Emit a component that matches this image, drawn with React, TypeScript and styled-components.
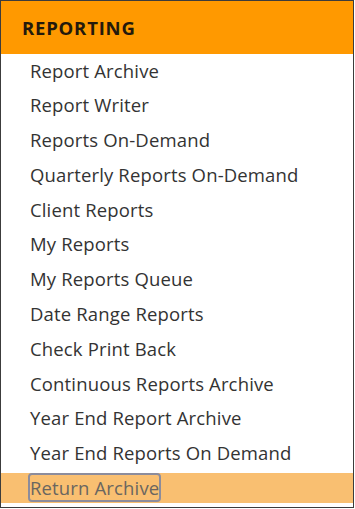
import React from 'react';
import styled, { createGlobalStyle } from 'styled-components';

const GlobalStyle = createGlobalStyle`
    body {
        margin: 0;
        background-color: #ffffff;
        font-family: "Open Sans", "Liberation Sans", sans-serif;
    }
`

const Panel = styled.div`
    width: 354px;
    height: 508px;
    box-sizing: border-box;
    border: 1px solid #3c3c3c;
    background-color: #ffffff;
    display: flex;
    flex-direction: column;
`

const Header = styled.div`
    height: 53px;
    flex-shrink: 0;
    background-color: #ff9900;
    display: flex;
    align-items: center;
    padding-left: 21px;
    font-size: 18.5px;
    font-weight: 700;
    color: #24190c;
    letter-spacing: 0.8px;
`

const List = styled.ul`
    list-style: none;
    margin: 0;
    padding: 1.5px 0 3px 0;
    display: flex;
    flex-direction: column;
    gap: 4.8px;
`

interface ItemProps {
    active?: boolean;
}

const Item = styled.li<ItemProps>`
    height: 30px;
    line-height: 30px;
    padding-left: 29px;
    font-size: 18.5px;
    letter-spacing: 0.15px;
    color: ${props => props.active ? '#6a6660' : '#333333'};
    background-color: ${props => props.active ? '#f9bf71' : 'transparent'};
    white-space: nowrap;
`

const Focused = styled.span`
    outline: 2px solid #8c8c9c;
    outline-offset: 0px;
    border-radius: 2px;
    line-height: 25px;
    margin-top: 2px;
    display: inline-block;
    vertical-align: top;
`

const items = [
    'Report Archive',
    'Report Writer',
    'Reports On-Demand',
    'Quarterly Reports On-Demand',
    'Client Reports',
    'My Reports',
    'My Reports Queue',
    'Date Range Reports',
    'Check Print Back',
    'Continuous Reports Archive',
    'Year End Report Archive',
    'Year End Reports On Demand',
]

export default function App(): JSX.Element {
    return (
        <>
            <GlobalStyle />
            <Panel>
                <Header>REPORTING</Header>
                <List>
                    {items.map(name => (
                        <Item key={name}>{name}</Item>
                    ))}
                    <Item active>
                        <Focused>Return Archive</Focused>
                    </Item>
                </List>
            </Panel>
        </>
    )
}
